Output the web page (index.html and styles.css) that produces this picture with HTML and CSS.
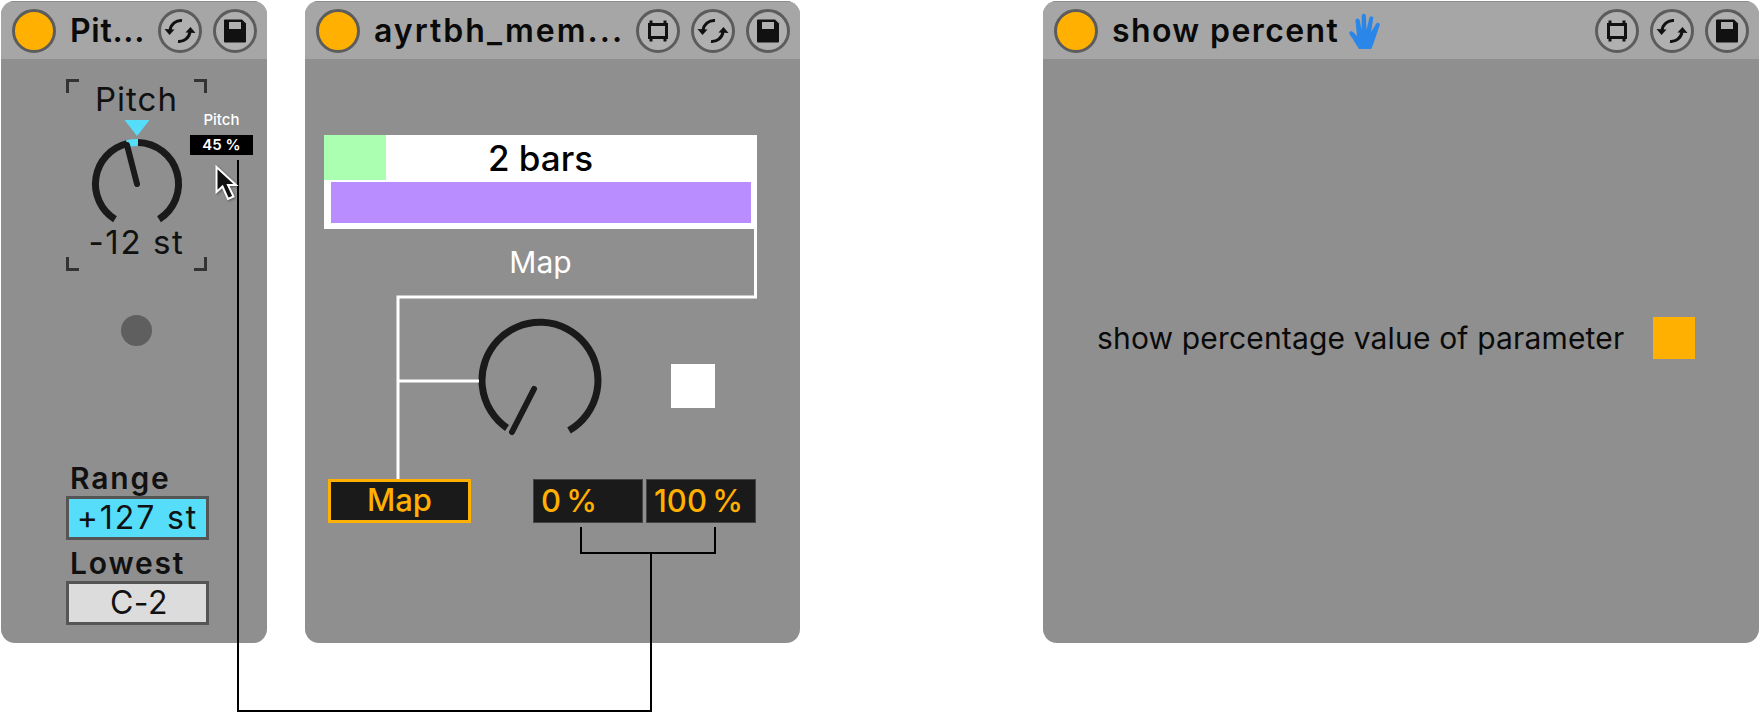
FILE: index.html
```html
<!DOCTYPE html>
<html lang="en">
<head>
    <meta charset="UTF-8">
    <title>Max for Live devices</title>
    <link rel="stylesheet" href="styles.css">
</head>
<body>
    <svg class="icon-defs" width="0" height="0">
        <symbol id="ico-freeze" viewBox="0 0 44 44">
            <circle cx="22" cy="22" r="20.5" class="ring"/>
            <path d="M13.5 15.5h17v13h-17z M15 11.5v5 M29 11.5v5 M15 27.5v5 M29 27.5v5" class="line"/>
        </symbol>
        <symbol id="ico-swap" viewBox="0 0 44 44">
            <circle cx="22" cy="22" r="20.5" class="ring"/>
            <path d="M24 11.500C18 11 13 15 12 21" class="line"/>
            <path d="M6.500 20l10 .5-5 5.500z" class="solid"/>
            <path d="M20 32.500C26 33 31 29 32 23" class="line"/>
            <path d="M37.500 24l-10-.5 5-5.500z" class="solid"/>
        </symbol>
        <symbol id="ico-save" viewBox="0 0 44 44">
            <circle cx="22" cy="22" r="20.5" class="ring"/>
            <path d="M12 10.500h17l4 4v18a1 1 0 0 1-1 1h-20a1 1 0 0 1-1-1v-21a1 1 0 0 1 1-1z" class="solid"/>
            <rect x="16" y="13" width="12" height="7" class="notch"/>
        </symbol>
    </svg>

    <div class="stage">
        <!-- pitch device -->
        <section class="device device-pitch">
            <header class="titlebar">
                <span class="toggle"></span>
                <h2 class="title">Pit...</h2>
                <svg class="btn"><use href="#ico-swap"/></svg>
                <svg class="btn"><use href="#ico-save"/></svg>
            </header>
            <div class="pitch-body">
                <div class="knob-box">
                    <i class="corner tl"></i><i class="corner tr"></i><i class="corner bl"></i><i class="corner br"></i>
                    <div class="knob-label">Pitch</div>
                    <svg class="knob" viewBox="0 0 100 108">
                        <path d="M37.500 2h25L50 18z" class="cyan"/>
                        <path d="M28 101.200A41.500 41.500 0 0 1 40 25.700" class="arc"/>
                        <path d="M40 25.700A41.500 41.500 0 0 1 51 24.500" class="arc arc-cyan"/>
                        <path d="M51 24.500A41.500 41.500 0 0 1 72 101.200" class="arc"/>
                        <path d="M50 66L40 27" class="needle"/>
                    </svg>
                    <div class="knob-value">-12 st</div>
                    <div class="hint">
                        <div class="hint-name">Pitch</div>
                        <div class="hint-value">45 %</div>
                    </div>
                </div>
                <div class="led"></div>
                <div class="field-label first">Range</div>
                <div class="field field-cyan">+127 st</div>
                <div class="field-label">Lowest</div>
                <div class="field field-grey">C-2</div>
            </div>
        </section>

        <!-- memory device -->
        <section class="device device-mem">
            <header class="titlebar">
                <span class="toggle"></span>
                <h2 class="title">ayrtbh_mem...</h2>
                <svg class="btn"><use href="#ico-freeze"/></svg>
                <svg class="btn"><use href="#ico-swap"/></svg>
                <svg class="btn"><use href="#ico-save"/></svg>
            </header>
            <div class="mem-body">
                <div class="clip">
                    <div class="clip-progress"></div>
                    <div class="clip-name">2 bars</div>
                    <div class="clip-bar"></div>
                </div>
                <div class="map-title">Map</div>
                <div class="mem-row">
                    <svg class="mem-knob" viewBox="0 0 122 118">
                        <path d="M28 110A58 58 0 1 1 90 112.500" class="arc"/>
                        <path d="M55 71L33 114" class="needle"/>
                    </svg>
                    <div class="mem-square"></div>
                </div>
                <div class="mem-controls">
                    <div class="map-btn">Map</div>
                    <div class="num num-min">0 %</div>
                    <div class="num num-max">100 %</div>
                </div>
            </div>
        </section>

        <!-- option device -->
        <section class="device device-percent">
            <header class="titlebar">
                <span class="toggle"></span>
                <h2 class="title">show percent</h2>
                <svg class="hand" viewBox="0 0 34 38">
                    <path d="M11 37C8 33 6 28 2 23c-2-3 1-5 3-3l4 4L7.500 9c-.4-3 3.600-3.500 4.200-.6L13.500 18l.3-14c.1-3 4-3 4.100 0L18.500 18l2.800-12c.7-2.800 4.500-2 3.900.8L23 20l5-8c1.400-2.500 4.800-.9 3.500 1.800L27 27c-1.500 4-2 7-4 10z" fill="#2b86ea"/>
                </svg>
                <svg class="btn"><use href="#ico-freeze"/></svg>
                <svg class="btn"><use href="#ico-swap"/></svg>
                <svg class="btn"><use href="#ico-save"/></svg>
            </header>
            <div class="percent-body">
                <span class="percent-text">show percentage value of parameter</span>
                <span class="percent-check"></span>
            </div>
        </section>

        <!-- annotation wires drawn over the devices -->
        <svg class="wires" width="1760" height="715">
            <path d="M238 160V711H651V553 M581 527V553H715V527" class="wire-black"/>
            <path d="M755.500 229V297H398V479 M398 381H479" class="wire-white"/>
            <path d="M216.500 167V192L222.500 186.500 228 199 233.500 196.500 228 185H236z" class="cursor"/>
        </svg>
    </div>
</body>
</html>
```

FILE: styles.css
```css
* {
    margin: 0;
    padding: 0;
    box-sizing: border-box;
}

body {
    font-family: Inter, "Liberation Sans", sans-serif;
    background-color: white;
    color: #111;
    overflow: hidden;
}

.icon-defs {
    position: absolute;
}

.ring {
    fill: #b0b0b0;
    stroke: #5c5c5c;
    stroke-width: 3;
}

.line {
    fill: none;
    stroke: #111;
    stroke-width: 3;
}

.solid {
    fill: #111;
}

.notch {
    fill: #b0b0b0;
}

.stage {
    position: relative;
    width: 1760px;
    height: 715px;
    display: flex;
    padding-top: 1px;
    padding-left: 1px;
}

.device {
    height: 642px;
    background-color: #8f8f8f;
    border-radius: 14px;
    overflow: hidden;
}

.device-pitch {
    width: 266px;
}

.device-mem {
    width: 495px;
    margin-left: 38px;
}

.device-percent {
    width: 716px;
    margin-left: 243px;
}

.titlebar {
    display: flex;
    align-items: center;
    height: 58px;
    padding: 0 10px 0 11px;
    background-color: #a6a6a6;
    border-top: 1px solid #8c8c8c;
}

.toggle {
    flex: none;
    width: 44px;
    height: 44px;
    border-radius: 50%;
    background-color: #ffb000;
    border: 3px solid #5c5c5c;
}

.title {
    flex: 1;
    margin-left: 14px;
    font-size: 32px;
    font-weight: 600;
    letter-spacing: 2px;
    white-space: nowrap;
    color: #0a0a0a;
}

.btn {
    flex: none;
    width: 44px;
    height: 44px;
    margin-left: 11px;
}

.device-pitch .btn:nth-of-type(1),
.device-mem .btn:nth-of-type(1) {
    margin-left: 0;
}

.device-pitch .title {
    letter-spacing: 0.700px;
}

.device-percent .title {
    flex: none;
    letter-spacing: 1.400px;
}

.hand {
    width: 34px;
    height: 38px;
    margin-left: 9px;
    margin-right: auto;
}

/* pitch */

.pitch-body {
    padding-left: 65px;
}

.knob-box {
    position: relative;
    width: 141px;
    height: 192px;
    margin-top: 20px;
    text-align: center;
}

.corner {
    position: absolute;
    width: 13px;
    height: 14px;
    border: 0 solid #333;
}

.corner.tl { top: 0; left: 0; border-width: 3px 0 0 3px; }
.corner.tr { top: 0; right: 0; border-width: 3px 3px 0 0; }
.corner.bl { bottom: 0; left: 0; border-width: 0 0 3px 3px; }
.corner.br { bottom: 0; right: 0; border-width: 0 3px 3px 0; }

.knob-label {
    height: 39px;
    font-size: 33px;
    line-height: 41px;
    letter-spacing: 1px;
}

.knob {
    display: block;
    width: 100px;
    height: 108px;
    margin-left: 20.500px;
    overflow: visible;
}

.knob-value {
    font-size: 33px;
    line-height: 32px;
    letter-spacing: 1.600px;
}

.cyan {
    fill: #55ddf9;
}

.arc {
    fill: none;
    stroke: #1a1a1a;
    stroke-width: 7;
}

.arc-cyan {
    stroke: #55ddf9;
}

.needle {
    fill: none;
    stroke: #1a1a1a;
    stroke-width: 6;
    stroke-linecap: round;
}

.hint {
    position: absolute;
    top: 31px;
    left: 124px;
    width: 63px;
    text-align: center;
    color: white;
    font-size: 15px;
}

.hint-name {
    height: 25px;
    line-height: 19px;
    font-weight: 500;
}

.hint-value {
    height: 20px;
    line-height: 20px;
    background-color: black;
    font-weight: 600;
}

.led {
    width: 31px;
    height: 31px;
    margin: 44px 0 0 55px;
    border-radius: 50%;
    background-color: #5f5f5f;
}

.field-label {
    height: 41px;
    padding: 7px 0 0 4px;
    font-size: 30px;
    line-height: 33px;
    font-weight: 600;
    letter-spacing: 1.800px;
}

.field-label.first {
    height: 32px;
    padding-top: 0;
    margin-top: 116px;
    margin-bottom: 2px;
}

.field {
    width: 143px;
    height: 44px;
    border: 3px solid #555;
    font-size: 32px;
    line-height: 38px;
    text-align: center;
    letter-spacing: 0.500px;
}

.field-cyan {
    background-color: #55ddf9;
    letter-spacing: 1.900px;
}

.field-grey {
    padding-left: 3px;
    background-color: #dcdcdc;
}

/* memory */

.clip {
    position: relative;
    width: 433px;
    height: 94px;
    margin: 76px 0 0 19px;
    background-color: white;
}

.clip-progress {
    position: absolute;
    top: 0;
    left: 0;
    width: 62px;
    height: 45px;
    background-color: #aaffb0;
}

.clip-name {
    position: relative;
    height: 47px;
    font-size: 35px;
    font-weight: 500;
    line-height: 47px;
    text-align: center;
    color: black;
}

.clip-bar {
    height: 41px;
    margin: 0 6px 0 7px;
    background-color: #b98cff;
}

.map-title {
    width: 433px;
    height: 68px;
    margin-left: 19px;
    font-size: 30px;
    line-height: 66px;
    text-align: center;
    color: white;
}

.mem-row {
    display: flex;
    height: 182px;
    padding-left: 174px;
}

.mem-knob {
    width: 122px;
    height: 118px;
    margin-top: 21px;
    overflow: visible;
}

.mem-square {
    width: 44px;
    height: 44px;
    margin: 67px 0 0 70px;
    background-color: white;
}

.mem-controls {
    display: flex;
    height: 44px;
    padding-left: 23px;
    font-size: 31px;
    font-weight: 500;
    color: #ffb000;
}

.map-btn {
    width: 143px;
    border: 3.500px solid #ffb000;
    background-color: #1a1a1a;
    text-align: center;
    line-height: 36px;
}

.num {
    width: 110px;
    padding-left: 7px;
    border: 1px solid #444;
    background-color: #1a1a1a;
    line-height: 42px;
    word-spacing: -3px;
}

.num-min {
    margin-left: 62px;
}

.num-max {
    margin-left: 3px;
}

/* percent */

.percent-body {
    display: flex;
    align-items: flex-start;
    padding: 258px 0 0 54px;
}

.percent-text {
    font-size: 30px;
    line-height: 42px;
    letter-spacing: 0.160px;
    white-space: nowrap;
    color: #0a0a0a;
}

.percent-check {
    width: 42px;
    height: 42px;
    margin-left: 29px;
    background-color: #ffb000;
}

/* overlay */

.wires {
    position: absolute;
    top: 0;
    left: 0;
    pointer-events: none;
}

.wire-black {
    fill: none;
    stroke: black;
    stroke-width: 2;
}

.wire-white {
    fill: none;
    stroke: white;
    stroke-width: 3;
}

.cursor {
    fill: #111;
    stroke: white;
    stroke-width: 2;
    filter: drop-shadow(1px 1px 1px rgba(0, 0, 0, 0.4));
}
```
